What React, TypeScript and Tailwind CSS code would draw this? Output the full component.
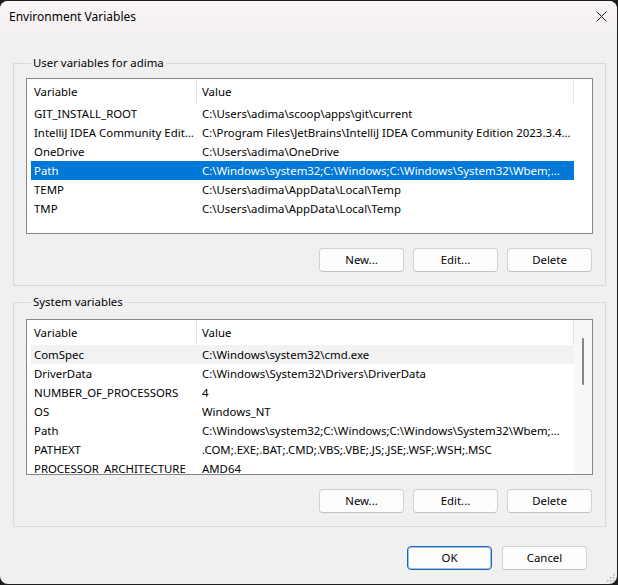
import React from 'react';

type Row = { name: string; value: string };

const userVars: Row[] = [
  { name: 'GIT_INSTALL_ROOT', value: 'C:\\Users\\adima\\scoop\\apps\\git\\current' },
  { name: 'IntelliJ IDEA Community Edit...', value: 'C:\\Program Files\\JetBrains\\IntelliJ IDEA Community Edition 2023.3.4...' },
  { name: 'OneDrive', value: 'C:\\Users\\adima\\OneDrive' },
  { name: 'Path', value: 'C:\\Windows\\system32;C:\\Windows;C:\\Windows\\System32\\Wbem;...' },
  { name: 'TEMP', value: 'C:\\Users\\adima\\AppData\\Local\\Temp' },
  { name: 'TMP', value: 'C:\\Users\\adima\\AppData\\Local\\Temp' },
];

const systemVars: Row[] = [
  { name: 'ComSpec', value: 'C:\\Windows\\system32\\cmd.exe' },
  { name: 'DriverData', value: 'C:\\Windows\\System32\\Drivers\\DriverData' },
  { name: 'NUMBER_OF_PROCESSORS', value: '4' },
  { name: 'OS', value: 'Windows_NT' },
  { name: 'Path', value: 'C:\\Windows\\system32;C:\\Windows;C:\\Windows\\System32\\Wbem;...' },
  { name: 'PATHEXT', value: '.COM;.EXE;.BAT;.CMD;.VBS;.VBE;.JS;.JSE;.WSF;.WSH;.MSC' },
  { name: 'PROCESSOR_ARCHITECTURE', value: 'AMD64' },
];

function WinButton({ label, primary }: { label: string; primary?: boolean }) {
  return (
    <button
      className={`w-[85px] h-[24px] rounded-[4px] bg-[#fdfdfd] text-black flex items-center justify-center border ${
        primary ? 'border-[#1f63b4] shadow-[inset_0_0_0_1px_#9cc2ec]' : 'border-[#d1d1d1] border-b-[#c2c2c2]'
      }`}
    >
      {label}
    </button>
  );
}

function VarList({ rows, selected, hovered, scroll }: { rows: Row[]; selected?: number; hovered?: number; scroll?: boolean }) {
  return (
    <div className="h-[156px] border border-[#868686] bg-white flex overflow-hidden">
      <div className="flex-1 flex flex-col overflow-hidden">
        {/* header */}
        <div className="h-[25px] flex shrink-0">
          <div className="w-[170px] border-r border-[#e5e5e5] pl-[7px] flex items-center">Variable</div>
          <div className="w-[377px] border-r border-[#e5e5e5] pl-[5px] flex items-center">Value</div>
        </div>
        {rows.map((r, i) => {
          const sel = i === selected;
          const hov = i === hovered;
          return (
            <div
              key={i}
              className={`ml-[4px] w-[543px] h-[19px] shrink-0 flex items-center whitespace-nowrap ${
                sel ? 'bg-[#0078d7] text-white' : hov ? 'bg-[#f2f2f2]' : ''
              }`}
            >
              <div className="w-[171px] pl-[3px] overflow-hidden">{r.name}</div>
              <div className="flex-1 overflow-hidden">{r.value}</div>
            </div>
          );
        })}
      </div>
      {scroll ? (
        <div className="w-[18px] bg-[#f7f7f7] pl-[8px] pt-[18px]">
          <div className="w-[2px] h-[47px] rounded-full bg-[#858585]" />
        </div>
      ) : (
        <div className="w-[18px]" />
      )}
    </div>
  );
}

function Group({ title, children, listMt }: { title: string; children: React.ReactNode; listMt: string }) {
  return (
    <fieldset className="ml-[13px] w-[592px] border border-[#d9d9d9] px-[12px] pb-[13px]">
      <legend className="ml-[5px] px-[2px] h-[16px] leading-[16px]">{title}</legend>
      <div className={listMt}>{children}</div>
    </fieldset>
  );
}

export default function App() {
  return (
    <div
      className="w-[618px] h-[585px] bg-[#1e1e1e] pt-[1px] text-[11.4px] text-black"
      style={{ fontFamily: '"Segoe UI", "Noto Sans", "Liberation Sans", sans-serif' }}
    >
      <div className="relative w-[617px] h-[583px] rounded-[8px] bg-[#f0f0f0] overflow-hidden flex flex-col">
        {/* title bar */}
        <div className="h-[31px] shrink-0 flex items-center justify-between pl-[9px] pr-[10px] bg-linear-to-b from-[#fbf6f8] to-[#f3f0f1]">
          <span className="leading-none text-[12px]">Environment Variables</span>
          <svg width="11" height="11" viewBox="0 0 11 11">
            <path d="M0.5 0.5 L10.5 10.5 M10.5 0.5 L0.5 10.5" stroke="#1b1b1b" strokeWidth="1" />
          </svg>
        </div>

        <div className="mt-[23px]">
          <Group title="User variables for adima" listMt="mt-[7px]">
            <VarList rows={userVars} selected={3} />
            <div className="mt-[14px] flex justify-end gap-[9px] pr-[1px]">
              <WinButton label="New..." />
              <WinButton label="Edit..." />
              <WinButton label="Delete" />
            </div>
          </Group>
        </div>

        <div className="mt-[8px]">
          <Group title="System variables" listMt="mt-[9px]">
            <VarList rows={systemVars} hovered={0} scroll />
            <div className="mt-[14px] flex justify-end gap-[9px] pr-[1px]">
              <WinButton label="New..." />
              <WinButton label="Edit..." />
              <WinButton label="Delete" />
            </div>
          </Group>
        </div>

        <div className="mt-[19px] flex justify-end gap-[10px] pr-[30px]">
          <WinButton label="OK" primary />
          <WinButton label="Cancel" />
        </div>

        {/* resize grip */}
        <svg width="9" height="9" viewBox="0 0 9 9" className="absolute right-[2px] bottom-[2px]">
          <rect x="7" y="1" width="1.5" height="1.5" fill="#b0b0b0" />
          <rect x="4" y="4" width="1.5" height="1.5" fill="#b0b0b0" />
          <rect x="7" y="4" width="1.5" height="1.5" fill="#b0b0b0" />
          <rect x="1" y="7" width="1.5" height="1.5" fill="#b0b0b0" />
          <rect x="4" y="7" width="1.5" height="1.5" fill="#b0b0b0" />
          <rect x="7" y="7" width="1.5" height="1.5" fill="#b0b0b0" />
        </svg>
      </div>
    </div>
  );
}
